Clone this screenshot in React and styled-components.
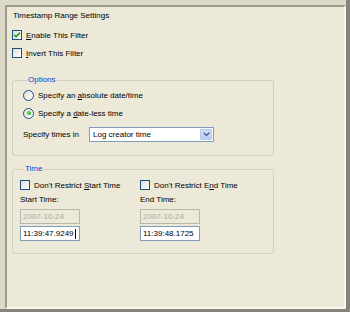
import React from "react";
import styled, { createGlobalStyle } from "styled-components";

const Global = createGlobalStyle`
  html, body { margin: 0; padding: 0; background: #ECE9D8; }
  body { font-family: "Liberation Sans", Arial, sans-serif; font-size: 8px; color: #000; }
  * { box-sizing: border-box; }
`;

const Frame = styled.div`
  width: 350px;
  height: 312px;
  display: flex;
  background: #dcd9c9;
  padding: 5px 0 0 5px;
  border-right: 4px solid #85847a;
  border-bottom: 3px solid #85847a;
`;

const Panel = styled.div`
  flex: 1;
  display: flex;
  flex-direction: column;
  background: #ECE9D8;
  border-style: solid;
  border-width: 2px;
  border-color: #9f9c8c #f7f6f0 #f7f6f0 #9f9c8c;
  padding: 3px 0 0 5px;
`;

const Title = styled.div`
  line-height: 12px;
  height: 12px;
  padding-left: 1px;
  margin-bottom: 4px;
`;

const Row = styled.label`
  display: flex;
  align-items: center;
  height: ${(p) => p.$h || 18}px;
  gap: ${(p) => p.$gap || 4}px;
  white-space: nowrap;
`;

const Box = styled.span`
  width: 10px;
  height: 10px;
  flex: none;
  border: 1px solid #1c5180;
  background: linear-gradient(135deg, #dcdcd7 0%, #f3f3ef 60%, #fff 100%);
  display: flex;
  align-items: center;
  justify-content: center;
`;

const Radio = styled.span`
  width: 11px;
  height: 11px;
  flex: none;
  border-radius: 50%;
  border: 1px solid #1c5180;
  background: linear-gradient(135deg, #dcdcd7 0%, #f3f3ef 60%, #fff 100%);
  display: flex;
  align-items: center;
  justify-content: center;
  &::after {
    content: "";
    width: 4px;
    height: 4px;
    border-radius: 50%;
    background: ${(p) => (p.$on ? "radial-gradient(circle at 40% 35%, #5ee25e, #21a121)" : "transparent")};
  }
`;

const Group = styled.fieldset`
  width: 262px;
  margin: ${(p) => p.$mt || 0}px 0 0 0;
  padding: ${(p) => p.$pad};
  border: 1px solid #d0d0bf;
  border-radius: 3px;
  min-width: 0;
`;

const Legend = styled.legend`
  color: #0046d5;
  line-height: 12px;
  padding: 0 1px;
  margin-left: 4px;
`;

const Select = styled.div`
  width: 125px;
  height: 15px;
  margin-left: 6px;
  border: 1px solid #7f9db9;
  background: #fff;
  display: flex;
  align-items: center;
  padding: 1px 1px 1px 3px;
`;

const SelectText = styled.span`
  flex: 1;
`;

const DropBtn = styled.span`
  width: 12px;
  height: 100%;
  background: linear-gradient(180deg, #d2def9 0%, #b9cbf5 100%);
  border: 1px solid #b5c8f2;
  border-radius: 1px;
  display: flex;
  align-items: center;
  justify-content: center;
`;

const Columns = styled.div`
  display: flex;
`;

const Col = styled.div`
  width: ${(p) => p.$w}px;
  display: flex;
  flex-direction: column;
`;

const FieldLabel = styled.div`
  line-height: 12px;
  height: 12px;
  margin-bottom: 3px;
`;

const Input = styled.div`
  width: 60px;
  height: 15px;
  margin-top: ${(p) => p.$mt || 0}px;
  border: 1px solid ${(p) => (p.$disabled ? "#b9b7ab" : "#7f9db9")};
  background: ${(p) => (p.$disabled ? "#ECE9D8" : "#fff")};
  color: ${(p) => (p.$disabled ? "#aca899" : "#000")};
  display: flex;
  align-items: center;
  padding-left: 2px;
  white-space: nowrap;
`;

const Caret = styled.span`
  display: inline-block;
  width: 1px;
  height: 10px;
  background: #000;
  margin-left: 1px;
`;

const Check = () => (
  <svg width="8" height="8" viewBox="0 0 8 8">
    <path d="M1 3.8 L3 5.8 L7 1.6" stroke="#21a121" strokeWidth="1.6" fill="none" />
  </svg>
);

const Chevron = () => (
  <svg width="7" height="5" viewBox="0 0 7 5">
    <path d="M0.8 0.8 L3.5 3.5 L6.2 0.8" stroke="#4d6185" strokeWidth="1.5" fill="none" />
  </svg>
);

export default function App() {
  return (
    <>
      <Global />
      <Frame>
        <Panel>
          <Title>Timestamp Range Settings</Title>
          <Row>
            <Box><Check /></Box>
            <span><u>E</u>nable This Filter</span>
          </Row>
          <Row>
            <Box />
            <span><u>I</u>nvert This Filter</span>
          </Row>
          <Group $mt={12} $pad="0 0 13px 10px">
            <Legend>Options</Legend>
            <Row>
              <Radio />
              <span>Specify an <u>a</u>bsolute date/time</span>
            </Row>
            <Row>
              <Radio $on />
              <span>Specify a <u>d</u>ate-less time</span>
            </Row>
            <Row $h={16} $gap={0} style={{ marginTop: 4 }}>
              <span>Specify times in</span>
              <Select>
                <SelectText>Log creator time</SelectText>
                <DropBtn><Chevron /></DropBtn>
              </Select>
            </Row>
          </Group>
          <Group $mt={7} $pad="1px 0 12px 7px">
            <Legend>Time</Legend>
            <Columns>
              <Col $w={120}>
                <Row>
                  <Box />
                  <span>Don't Restrict <u>S</u>tart Time</span>
                </Row>
                <FieldLabel>Start Time:</FieldLabel>
                <Input $disabled>2007-10-24</Input>
                <Input $mt={2}>11:39:47.9249<Caret /></Input>
              </Col>
              <Col $w={120}>
                <Row>
                  <Box />
                  <span>Don't Restrict E<u>n</u>d Time</span>
                </Row>
                <FieldLabel>End Time:</FieldLabel>
                <Input $disabled>2007-10-24</Input>
                <Input $mt={2}>11:39:48.1725</Input>
              </Col>
            </Columns>
          </Group>
        </Panel>
      </Frame>
    </>
  );
}
